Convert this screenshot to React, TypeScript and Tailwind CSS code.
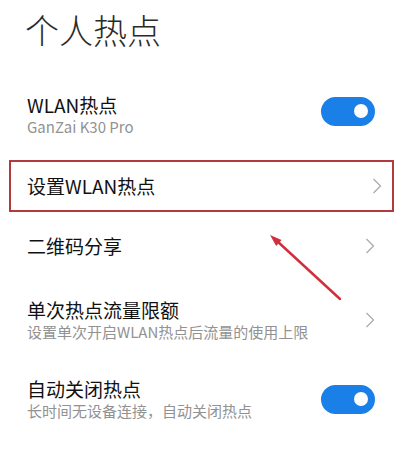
import React from "react";

const FONT = { fontFamily: '"Noto Sans CJK SC", "Noto Sans", sans-serif' };

function Chevron() {
  return (
    <svg width="10" height="16" viewBox="0 0 10 16" className="shrink-0">
      <polyline
        points="1.5,1 8.5,8 1.5,15"
        fill="none"
        stroke="#a8a8a8"
        strokeWidth="1.2"
        strokeLinejoin="miter"
      />
    </svg>
  );
}

function Toggle({ className = "" }: { className?: string }) {
  return (
    <div
      className={`flex h-[29px] w-[54px] shrink-0 items-center justify-end rounded-full bg-[#1b7fe8] pr-[7px] ${className}`}
    >
      <div className="h-[14px] w-[14px] rounded-full bg-white" />
    </div>
  );
}

function TwoLine({ title, sub }: { title: string; sub: string }) {
  return (
    <div className="flex flex-col">
      <span className="text-[19px] leading-[24px] text-[#111]">{title}</span>
      <span className="text-[15px] leading-[20px] text-[#929292]">{sub}</span>
    </div>
  );
}

export default function App() {
  return (
    <div className="relative h-[456px] w-[403px] overflow-hidden bg-white" style={FONT}>
      <div className="h-[50px] pl-[25px] pt-[10px] text-[34px] font-extralight leading-[40px] text-[#2a2a2a]">
        个人热点
      </div>

      <div className="flex items-center justify-between pl-[27px] pr-[28px] pt-[43px]">
        <TwoLine title="WLAN热点" sub="GanZai K30 Pro" />
        <Toggle className="mb-[8px]" />
      </div>

      <div className="mx-[9px] mt-[23px] flex h-[52px] items-center justify-between border-2 border-[#b23a3f] pl-[16px] pr-[10px]">
        <span className="text-[19px] leading-[24px] text-[#111]">设置WLAN热点</span>
        <Chevron />
      </div>

      <div className="flex h-[68px] items-center justify-between pl-[27px] pr-[28px]">
        <span className="text-[19px] leading-[24px] text-[#111]">二维码分享</span>
        <Chevron />
      </div>

      <div className="flex items-center justify-between pl-[27px] pr-[28px] pt-[18px]">
        <TwoLine title="单次热点流量限额" sub="设置单次开启WLAN热点后流量的使用上限" />
        <Chevron />
      </div>

      <div className="mt-[35px] flex items-center justify-between pl-[27px] pr-[28px]">
        <TwoLine title="自动关闭热点" sub="长时间无设备连接，自动关闭热点" />
        <Toggle />
      </div>

      <svg
        className="pointer-events-none absolute inset-0"
        width="403"
        height="456"
        viewBox="0 0 403 456"
      >
        <line x1="340" y1="299" x2="277" y2="241" stroke="#d0303e" strokeWidth="2.5" strokeLinecap="round" />
        <polygon points="270,235 281.6,240.1 276.2,246.1" fill="#d0303e" />
      </svg>
    </div>
  );
}
